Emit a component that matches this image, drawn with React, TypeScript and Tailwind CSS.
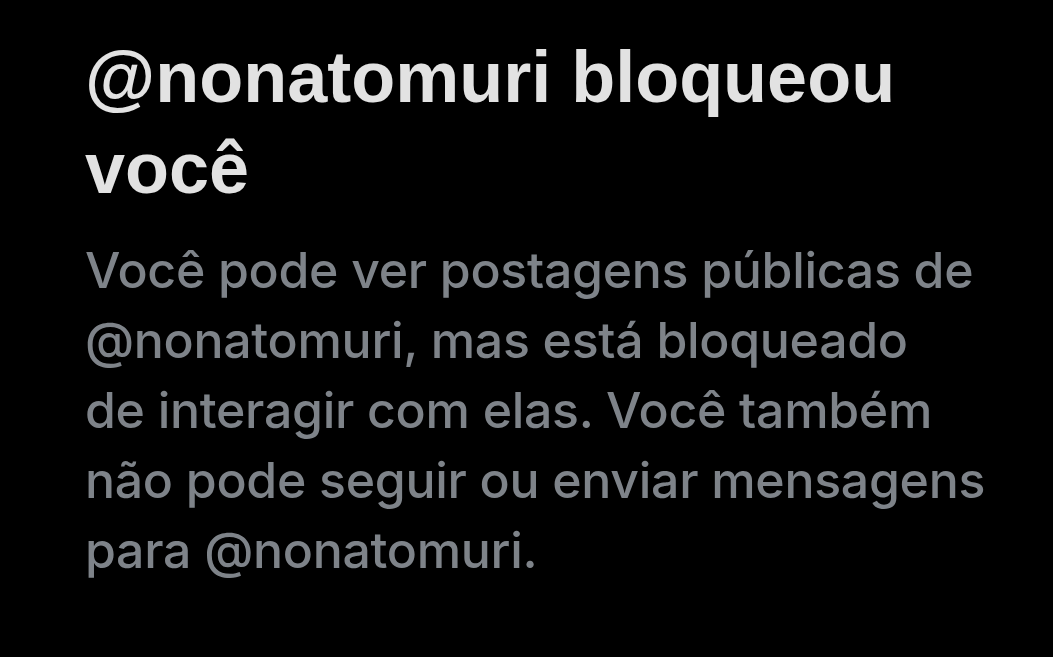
export default function App() {
  const lines = [
    "Você pode ver postagens públicas de",
    "@nonatomuri, mas está bloqueado",
    "de interagir com elas. Você também",
    "não pode seguir ou enviar mensagens",
    "para @nonatomuri.",
  ];
  return (
    <div className="w-[1053px] h-[657px] bg-black overflow-hidden">
      <div className="pl-[85px] pt-[32px]">
        <h1
          className="text-[72px] leading-[91px] font-bold text-[#e2e2e2] whitespace-nowrap"
          style={{ fontFamily: '"Liberation Sans", Arial, sans-serif' }}
        >
          <span className="block">@nonatomuri bloqueou</span>
          <span className="block">você</span>
        </h1>
        <p
          className="mt-[21px] text-[50px] leading-[70px] font-[450] text-[#7e8389] whitespace-nowrap tracking-[-0.3px]"
          style={{ fontFamily: 'Inter, "Noto Sans", sans-serif' }}
        >
          {lines.map((l) => (
            <span key={l} className="block">
              {l}
            </span>
          ))}
        </p>
      </div>
    </div>
  );
}
